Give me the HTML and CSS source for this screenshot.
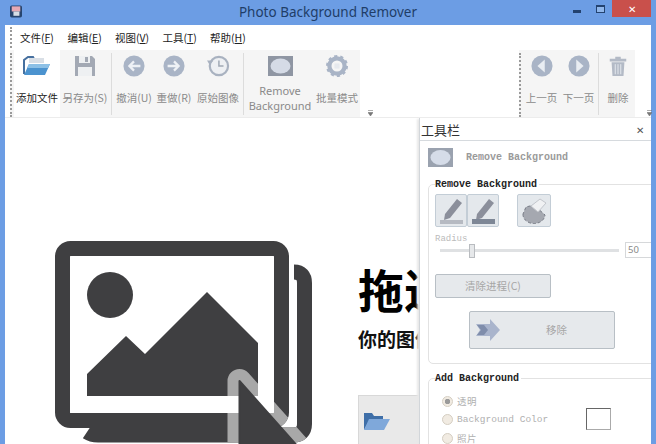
FILE: index.html
```html
<!DOCTYPE html>
<html lang="zh-CN">
<head>
<meta charset="UTF-8">
<meta name="viewport" content="width=device-width, initial-scale=1.0">
<title>Photo Background Remover</title>
<link rel="stylesheet" href="styles.css">
</head>
<body>

<div class="window">
  <div class="titlebar">
    <svg class="app-icon" width="12" height="13" viewBox="0 0 14 14"><rect width="14" height="14" rx="2" fill="#27456e"/><rect x="2" y="1" width="10" height="6" fill="#e6a9b4"/><rect x="4" y="7" width="7" height="5" fill="#d6dde6"/></svg>
    <span class="title">Photo Background Remover</span>
    <div class="win-buttons">
      <span class="win-min"></span>
      <span class="win-max"></span>
      <span class="win-close">✕</span>
    </div>
  </div>

  <div class="client">
    <div class="menubar">
      <span class="grip"></span>
      <a class="menu-item">文件(<u>F</u>)</a>
      <a class="menu-item">编辑(<u>E</u>)</a>
      <a class="menu-item">视图(<u>V</u>)</a>
      <a class="menu-item">工具(<u>T</u>)</a>
      <a class="menu-item">帮助(<u>H</u>)</a>
    </div>

    <div class="toolbars">
      <div class="toolbar">
        <span class="grip"></span>
        <div class="tool tool-active w46">
          <svg width="30" height="22" viewBox="0 0 30 22"><path d="M2 19V5l4-3h5l1 2" fill="none" stroke="#46709f" stroke-width="2"/><path d="M7 3h15v5H7z" fill="#d9dfe6"/><path d="M7 9h21l-5 11H2z" fill="#4b93cf"/><path d="M7 9h21l-2 4H5z" fill="#8cc0e6"/></svg>
          <span class="tool-label">添加文件</span>
        </div>
        <div class="tool w50">
          <svg width="22" height="22" viewBox="0 0 22 22"><path d="M1 1h17l3 3v17H1z" fill="#a3a9b4"/><rect x="5" y="1" width="11" height="7" fill="#eef0f2"/><rect x="11" y="2" width="3" height="5" fill="#a3a9b4"/><rect x="4" y="12" width="14" height="9" fill="#eef0f2"/></svg>
          <span class="tool-label">另存为(S)</span>
        </div>
        <span class="tool-sep"></span>
        <div class="tool w40">
          <svg width="24" height="24" viewBox="0 0 24 24"><circle cx="12" cy="12" r="11.500" fill="#a9b4c6"/><path d="M19 12H7m5-5-5 5 5 5" fill="none" stroke="#eef1f5" stroke-width="2.500"/></svg>
          <span class="tool-label">撤消(U)</span>
        </div>
        <div class="tool w40">
          <svg width="24" height="24" viewBox="0 0 24 24"><circle cx="12" cy="12" r="11.500" fill="#a9b4c6"/><path d="M5 12h12m-5-5 5 5-5 5" fill="none" stroke="#eef1f5" stroke-width="2.500"/></svg>
          <span class="tool-label">重做(R)</span>
        </div>
        <div class="tool w48">
          <svg width="26" height="24" viewBox="0 0 26 24"><circle cx="14" cy="12" r="10" fill="#eef0f3" stroke="#a9b2c0" stroke-width="2.400"/><path d="M14 6v6h5" fill="none" stroke="#a0a8b4" stroke-width="1.600"/><path d="M1 6h7L4 11z" fill="#a9b2c0"/></svg>
          <span class="tool-label">原始图像</span>
        </div>
        <span class="tool-sep"></span>
        <div class="tool w68">
          <svg width="25" height="20" viewBox="0 0 25 20"><rect width="25" height="20" fill="#8f96a3"/><ellipse cx="12.500" cy="10" rx="10" ry="7.500" fill="#d5dbe6"/></svg>
          <span class="tool-label tool-label-two">Remove<br>Background</span>
        </div>
        <div class="tool w46">
          <svg width="26" height="26" viewBox="0 0 26 26"><circle cx="13" cy="13" r="9" fill="none" stroke="#a9b4c6" stroke-width="5"/><circle cx="13" cy="13" r="11" fill="none" stroke="#a9b4c6" stroke-width="4" stroke-dasharray="3.500 3.400"/><rect x="10" y="10" width="6" height="6" fill="#e6e9ee"/></svg>
          <span class="tool-label">批量模式</span>
        </div>
      </div>
      <svg class="chevron" width="5" height="6" viewBox="0 0 5 6"><path d="M0 .5h5M0 2.500h5L2.500 6z" fill="#777" stroke="#777" stroke-width=".6"/></svg>

      <div class="toolbar toolbar-right">
        <span class="grip"></span>
        <div class="tool w37">
          <svg width="24" height="24" viewBox="0 0 24 24"><circle cx="12" cy="12" r="11.500" fill="#a9b4c6"/><path d="M15 5 7 12l8 7z" fill="#e9edf2"/></svg>
          <span class="tool-label">上一页</span>
        </div>
        <div class="tool w37">
          <svg width="24" height="24" viewBox="0 0 24 24"><circle cx="12" cy="12" r="11.500" fill="#a9b4c6"/><path d="m9 5 8 7-8 7z" fill="#e9edf2"/></svg>
          <span class="tool-label">下一页</span>
        </div>
        <span class="tool-sep"></span>
        <div class="tool w34">
          <svg width="20" height="24" viewBox="0 0 20 24"><path d="M7 2h6v2H7zM1 4h18v3H1zM3 8h14l-1 15H4z" fill="#b3bac6"/><path d="M7 10v11m3-11v11m3-11v11" stroke="#e9edf2"/></svg>
          <span class="tool-label">删除</span>
        </div>
      </div>
      <svg class="chevron chevron-right" width="5" height="6" viewBox="0 0 5 6"><path d="M0 .5h5M0 2.500h5L2.500 6z" fill="#777" stroke="#777" stroke-width=".6"/></svg>
    </div>

    <div class="workspace">
      <div class="dropzone">
        <svg class="drop-art" width="270" height="209" viewBox="50 235 270 209">
          <defs>
            <!-- the cursor outline only shows on top of the dark shapes -->
            <mask id="on-dark" maskUnits="userSpaceOnUse" x="50" y="235" width="270" height="209">
              <path d="M294 272c7 0 10.500 4 10.500 11v141c0 7-4 11-11 11H98c-4 0-8-1-11-3" fill="none" stroke="#fff" stroke-width="15"/>
              <rect x="62.500" y="248.500" width="219" height="172" rx="8" fill="none" stroke="#fff" stroke-width="15"/>
              <path d="M87 374l39-38 19 18 62-62 51 51v53H87z" fill="#fff"/>
            </mask>
          </defs>
          <path d="M294 272c7 0 10.500 4 10.500 11v141c0 7-4 11-11 11H98c-4 0-8-1-11-3" fill="none" stroke="#3f3f41" stroke-width="15"/>
          <rect x="62.500" y="248.500" width="219" height="172" rx="8" fill="#fff" stroke="#3f3f41" stroke-width="15"/>
          <circle cx="110" cy="295" r="23" fill="#3f3f41"/>
          <path d="M87 374l39-38 19 18 62-62 51 51v53H87z" fill="#3f3f41"/>
          <path d="M239.500 381L300 449H239.500z" fill="#a8a8a8" stroke="#a8a8a8" stroke-width="24" stroke-linejoin="round" mask="url(#on-dark)"/>
          <path d="M239.500 381L300 449H239.500z" fill="#3f3f41" stroke="#3f3f41" stroke-width="2" stroke-linejoin="round"/>
        </svg>
        <div class="drop-text">
          <h1 class="drop-head">拖进你的图像</h1>
          <p class="drop-sub">你的图像文件</p>
          <div class="drop-btn">
            <svg width="28" height="20" viewBox="0 0 28 20"><path d="M1 19V2h8l2 3h9v3H7z" fill="#3f6fa8"/><path d="M6 8h21l-6 11H1z" fill="#7fa8da"/></svg>
          </div>
        </div>
      </div>

      <div class="panel">
        <div class="panel-head">
          <span class="panel-title">工具栏</span>
          <span class="panel-close">✕</span>
        </div>
        <div class="panel-body">
          <div class="panel-mode">
            <svg width="25" height="19" viewBox="0 0 25 19"><rect width="25" height="19" fill="#9aa2af"/><ellipse cx="12.500" cy="9.500" rx="10" ry="7.500" fill="#d5dce8"/></svg>
            <span>Remove Background</span>
          </div>

          <fieldset class="group group-remove">
            <legend>Remove Background</legend>
            <div class="brush-row">
              <span class="brush">
                <svg width="28" height="28" viewBox="0 0 28 28"><path d="M20 2l5 4-12 15-6 2 1-6z" fill="#8b8f9b"/><rect x="3" y="23" width="23" height="4" fill="#b6bac2"/></svg>
              </span>
              <span class="brush">
                <svg width="28" height="28" viewBox="0 0 28 28"><path d="M20 2l5 4-12 15-6 2 1-6z" fill="#8b8f9b"/><rect x="3" y="22" width="23" height="5" fill="#7e8796"/></svg>
              </span>
              <span class="brush brush-erase">
                <svg width="28" height="28" viewBox="0 0 28 28"><path d="M3 17a11 9 0 0 0 22 1L14 8 6 10z" fill="#a5a8b0" stroke="#777b85" stroke-dasharray="3 2"/><path d="M11 9l9-7 6 4-8 9z" fill="#f0f1f3" stroke="#c3c6cc"/></svg>
              </span>
            </div>
            <div class="radius-label">Radius</div>
            <div class="radius-row">
              <div class="slider"><span class="slider-thumb"></span></div>
              <span class="radius-value">50</span>
            </div>
            <div class="btn btn-clear">清除进程(C)</div>
            <div class="btn btn-remove">
              <svg width="24" height="22" viewBox="0 0 24 22"><path d="M0 5h14V0l10 11-10 11v-5H0l4-6z" fill="#a9b4cc"/><path d="M1 6h7l4 5-4 5H1l4-5z" fill="#7f8dab"/></svg>
              <span>移除</span>
            </div>
          </fieldset>

          <fieldset class="group group-add">
            <legend>Add Background</legend>
            <div class="add-row">
              <div class="radio-list">
                <div class="radio radio-on">透明</div>
                <div class="radio">Background Color</div>
                <div class="radio">照片</div>
              </div>
              <span class="swatch"></span>
            </div>
          </fieldset>
        </div>
      </div>
    </div>
  </div>
</div>

</body>
</html>
```

FILE: styles.css
```css
/* Main window */
html, body {
  margin: 0;
  padding: 0;
  height: 100%;
  overflow: hidden;
}
body {
  font-family: "Noto Sans CJK SC", "Noto Sans", sans-serif;
  background-color: #6c9de4;
}
.window {
  width: 656px;
  height: 444px;
  display: flex;
  flex-direction: column;
  background-color: #6c9de4;
}
.titlebar {
  height: 25px;
  flex: none;
  display: flex;
  align-items: flex-start;
  position: relative;
}
.app-icon {
  margin: 5px 0 0 10px;
}
.title {
  position: absolute;
  left: 0;
  right: 0;
  top: 3px;
  text-align: center;
  font-family: "Noto Sans", sans-serif;
  font-size: 13.500px;
  line-height: 19px;
  color: #1f3d68;
}
.win-buttons {
  margin-left: auto;
  margin-right: 5px;
  display: flex;
  align-items: flex-start;
}
.win-min {
  width: 8px;
  height: 3px;
  margin: 10px 15px 0 0;
  background-color: #23426f;
}
.win-max {
  width: 7px;
  height: 5px;
  margin: 5px 7px 0 0;
  border: 1px solid #23426f;
  border-top-width: 2px;
  background-color: #8fb6ea;
}
.win-close {
  width: 39px;
  height: 17px;
  background-color: #c9504b;
  color: #fff;
  font-size: 10px;
  line-height: 17px;
  text-align: center;
}

.client {
  flex: 1;
  min-height: 0;
  margin: 0 5px;
  background-color: #fff;
  display: flex;
  flex-direction: column;
}

/* Menu */
.menubar {
  height: 25px;
  flex: none;
  display: flex;
  align-items: center;
  padding-left: 5px;
}
.grip {
  width: 0;
  border-left: 2px dotted #9a9a9a;
  align-self: stretch;
  margin: 2px 0;
  flex: none;
}
.menu-item {
  width: 47.500px;
  font-size: 10.500px;
  color: #222;
  white-space: nowrap;
}
.menu-item:first-of-type {
  margin-left: 8px;
}

/* Toolbars */
.toolbars {
  height: 67px;
  flex: none;
  display: flex;
  align-items: stretch;
  padding-left: 5px;
  border-bottom: 1px solid #ececec;
}
.toolbar {
  display: flex;
  align-items: stretch;
  padding-left: 2px;
  background-color: #f5f5f5;
}
.toolbar > .grip {
  margin: 3px 2px 0 -2px;
}
.toolbar-right {
  margin-left: 146px;
}
.chevron {
  align-self: flex-end;
  flex: none;
  margin: 0 0 1px 8px;
}
.chevron-right {
  margin-left: 12px;
}
.tool {
  display: flex;
  flex-direction: column;
  align-items: center;
  flex: none;
  height: 67px;
  padding-top: 5px;
  box-sizing: border-box;
  position: relative;
}
.tool svg {
  display: block;
  height: 22px;
}
.tool-active {
  background-color: #fff;
}
.w34 { width: 34px; }
.w37 { width: 37px; }
.w40 { width: 40px; }
.w46 { width: 46px; }
.w48 { width: 48px; }
.w50 { width: 50px; }
.w68 { width: 68px; }
.tool-label {
  position: absolute;
  left: 0;
  right: 0;
  top: 40px;
  text-align: center;
  white-space: nowrap;
  font-size: 10.500px;
  line-height: 15px;
  color: #8a8a8a;
}
.tool-active .tool-label {
  color: #222;
}
.tool-label-two {
  top: 33px;
  font-family: "Noto Sans", sans-serif;
  font-size: 11px;
}
.tool-sep {
  width: 1px;
  margin: 3px 2px 2px 1px;
  background-color: #dcdcdc;
  flex: none;
}

/* Workspace */
.workspace {
  flex: 1;
  min-height: 0;
  display: flex;
}
.dropzone {
  flex: 1;
  min-width: 0;
  overflow: hidden;
  display: flex;
  padding: 117px 0 0 45px;
}
.drop-art {
  display: block;
  flex: none;
  margin-right: 38px;
}
.drop-text {
  width: 150px;
  flex: none;
  padding-top: 25px;
}
.drop-head {
  margin: 0;
  font-size: 46px;
  line-height: 56px;
  font-weight: 700;
  color: #000;
  white-space: nowrap;
}
.drop-sub {
  margin: 8px 0 0;
  font-size: 19px;
  line-height: 30px;
  font-weight: 700;
  color: #111;
  white-space: nowrap;
}
.drop-btn {
  width: 90px;
  height: 60px;
  margin-top: 41px;
  padding: 15px 0 0 4px;
  box-sizing: border-box;
  background-color: #e9e9e9;
  border: 1px solid #d8d8d8;
}

/* Tool panel */
.panel {
  width: 232px;
  flex: none;
  box-sizing: border-box;
  overflow: hidden;
  border-left: 1px solid #d2d6da;
  box-shadow: -3px 0 2px -1px #e8e8e8;
  position: relative;
}
.panel-head {
  height: 22px;
  display: flex;
  align-items: center;
  justify-content: space-between;
  padding: 0 7px 0 1px;
  border-bottom: 1px solid #d6dade;
}
.panel-title {
  font-size: 13px;
  color: #333;
}
.panel-close {
  font-size: 10px;
  color: #555;
}
.panel-body {
  padding-left: 8px;
  font-family: "Liberation Mono", monospace;
}
.panel-mode {
  display: flex;
  align-items: center;
  gap: 13px;
  margin: 7px 0 0;
  font-size: 10px;
  font-weight: 700;
  color: #9a9a9a;
}
.panel-mode svg {
  display: block;
}
.group {
  margin: 11px -20px 0 0;
  padding: 0 0 0 6px;
  border: 1px solid #e2e2e2;
  border-radius: 5px;
  min-width: 0;
}
.group legend {
  padding: 0 2px 0 0;
  font-size: 10px;
  line-height: 13px;
  font-weight: 700;
  color: #222;
}
.group-remove {
  height: 186px;
  box-sizing: border-box;
}
.group-add {
  margin-top: 8px;
  height: 100px;
}
.brush-row {
  display: flex;
  margin-top: 3px;
}
.brush {
  width: 32px;
  height: 33px;
  box-sizing: border-box;
  border: 1px solid #c3cdd6;
  border-radius: 2px;
  background-color: #e4e8ec;
  display: flex;
  align-items: center;
  justify-content: center;
}
.brush-erase {
  width: 34px;
  margin-left: 18px;
}
.radius-label {
  margin-top: 6px;
  font-size: 9px;
  line-height: 13px;
  color: #bbb;
}
.radius-row {
  display: flex;
  align-items: center;
  height: 16px;
  margin-top: -4px;
}
.slider {
  width: 179px;
  height: 3px;
  margin-left: 5px;
  background-color: #dfe1e3;
  position: relative;
}
.slider-thumb {
  position: absolute;
  left: 29px;
  top: -5px;
  width: 4px;
  height: 12px;
  background-color: #e6e8ea;
  border: 1px solid #b9bcc0;
}
.radius-value {
  width: 40px;
  height: 16px;
  margin-left: 6px;
  box-sizing: border-box;
  padding-left: 2px;
  border: 1px solid #d6d8da;
  font-family: "Noto Sans", sans-serif;
  font-size: 9.500px;
  line-height: 14px;
  color: #888;
}
.btn {
  box-sizing: border-box;
  border: 1px solid #b8bfc5;
  border-radius: 2px;
  background-color: #e6e9ec;
  color: #a6a6a6;
  font-family: "Noto Sans CJK SC", sans-serif;
  font-size: 10.500px;
  text-align: center;
}
.btn-clear {
  width: 116px;
  height: 24px;
  margin-top: 16px;
  line-height: 22px;
}
.btn-remove {
  width: 146px;
  height: 38px;
  margin: 13px 0 0 34px;
  line-height: 36px;
  display: flex;
  align-items: center;
  padding-left: 6px;
}
.btn-remove span {
  margin-left: 46px;
}
.add-row {
  display: flex;
}
.radio-list {
  width: 144px;
  padding: 7px 0 0 7px;
}
.radio {
  height: 18.500px;
  display: flex;
  align-items: center;
  gap: 4px;
  font-size: 9.500px;
  color: #b0b0b0;
  white-space: nowrap;
}
.radio::before {
  content: '';
  width: 9px;
  height: 9px;
  flex: none;
  border: 1px solid #d5cec2;
  border-radius: 50%;
  background-color: #f1ebe2;
}
.radio-on::before {
  background: radial-gradient(circle, #9a9a9a 0 2.500px, #f1ebe2 3px);
}
.swatch {
  width: 25px;
  height: 22px;
  margin-top: 23px;
  box-sizing: border-box;
  border: 1px solid #aaa;
  border-top-color: #666;
  border-left-color: #666;
  background-color: #fff;
}
```
